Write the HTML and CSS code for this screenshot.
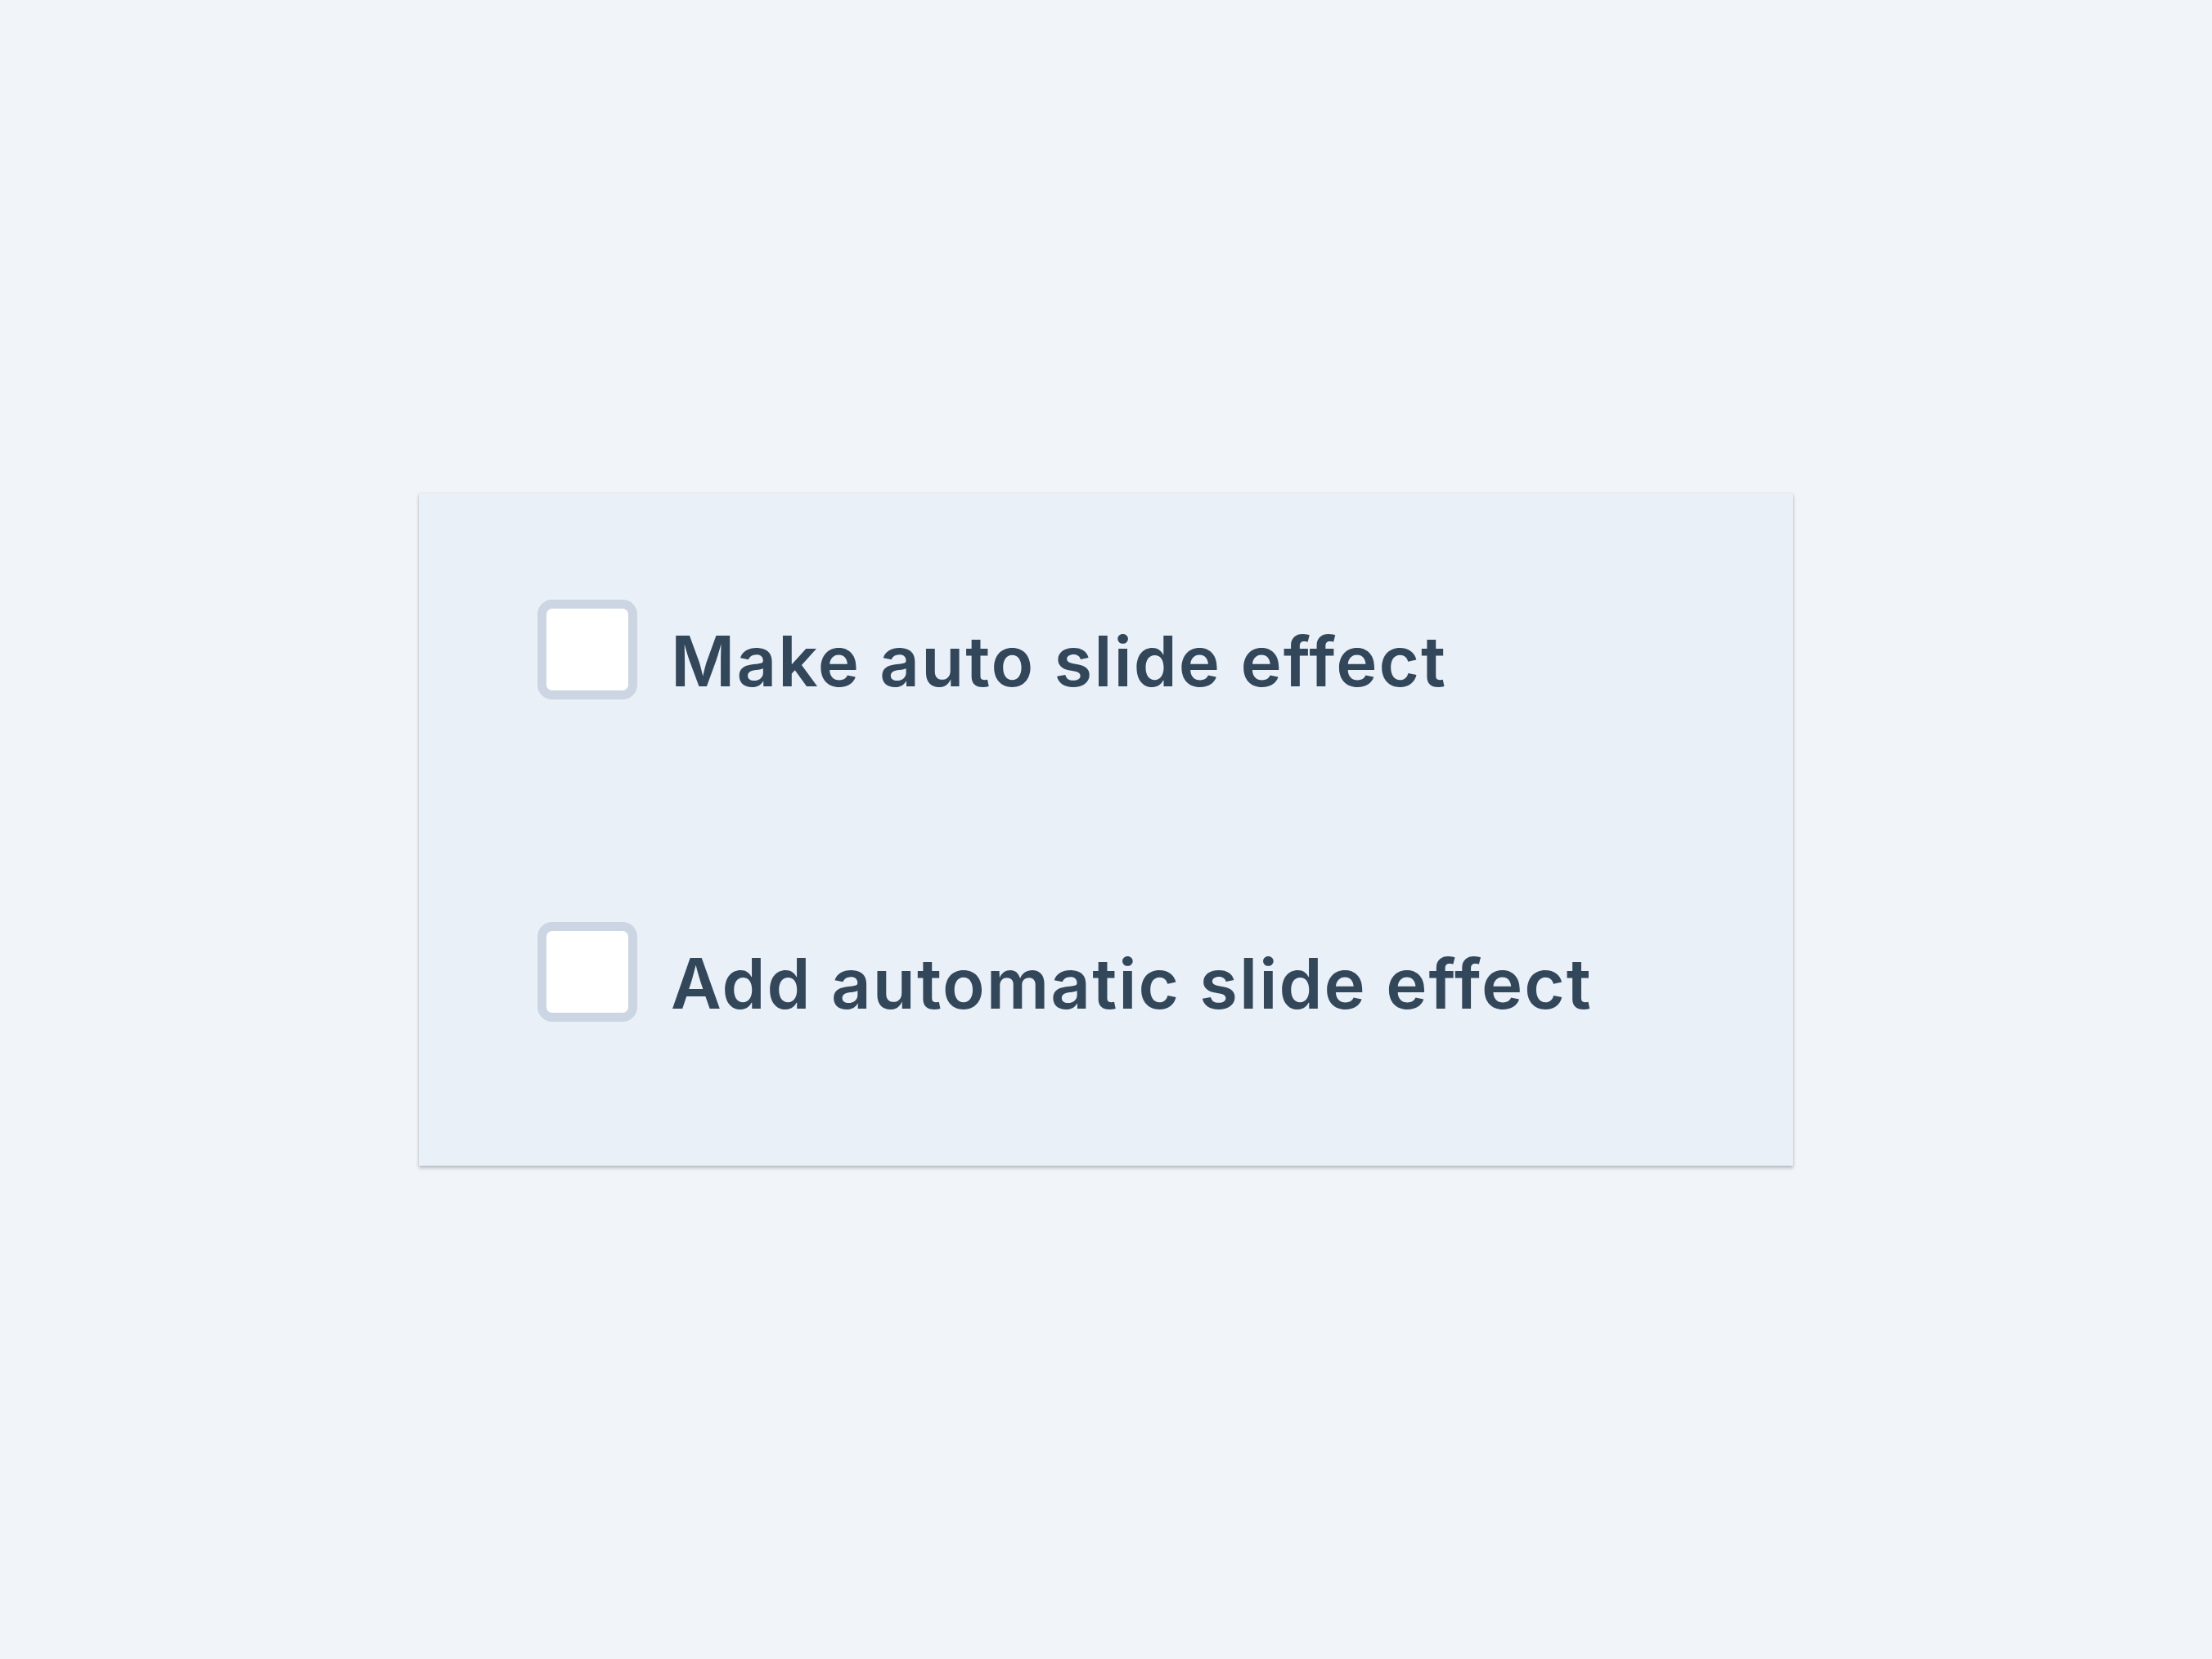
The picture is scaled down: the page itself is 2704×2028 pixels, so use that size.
FILE: index.html
```html
<!DOCTYPE html>
<html lang="en">
<head>
<meta charset="utf-8">
<title>Checkboxes</title>
<link rel="stylesheet" href="styles.css">
</head>
<body>
<div class="page">
  <div class="card">
    <label class="option">
      <span class="box"></span>
      <span class="text">Make auto slide effect</span>
    </label>
    <label class="option">
      <span class="box"></span>
      <span class="text">Add automatic slide effect</span>
    </label>
  </div>
</div>
</body>
</html>
```

FILE: styles.css
```css
html, body {
  margin: 0;
  padding: 0;
  background: #f1f5f9;
}
.page {
  width: 2704px;
  height: 2028px;
  display: flex;
  align-items: center;
  justify-content: center;
}
.card {
  box-sizing: border-box;
  width: 1680px;
  height: 822px;
  background: #eaf0f7;
  padding: 130px 145px 176px;
  display: flex;
  flex-direction: column;
  gap: 272px;
  box-shadow: 0 3px 4px rgba(0, 0, 0, 0.22), 0 0 2px rgba(0, 0, 0, 0.12);
}
.option {
  display: flex;
  align-items: flex-start;
  gap: 41px;
}
.box {
  box-sizing: border-box;
  flex: none;
  width: 122px;
  height: 122px;
  border: 11px solid #cbd6e2;
  border-radius: 18px;
  background: #ffffff;
}
.text {
  font-family: Inter, "Noto Sans", sans-serif;
  font-weight: 600;
  font-size: 85px;
  line-height: 1;
  letter-spacing: 2px;
  color: #33475b;
  padding-top: 33px;
  white-space: nowrap;
  font-variant-ligatures: none;
}
```
